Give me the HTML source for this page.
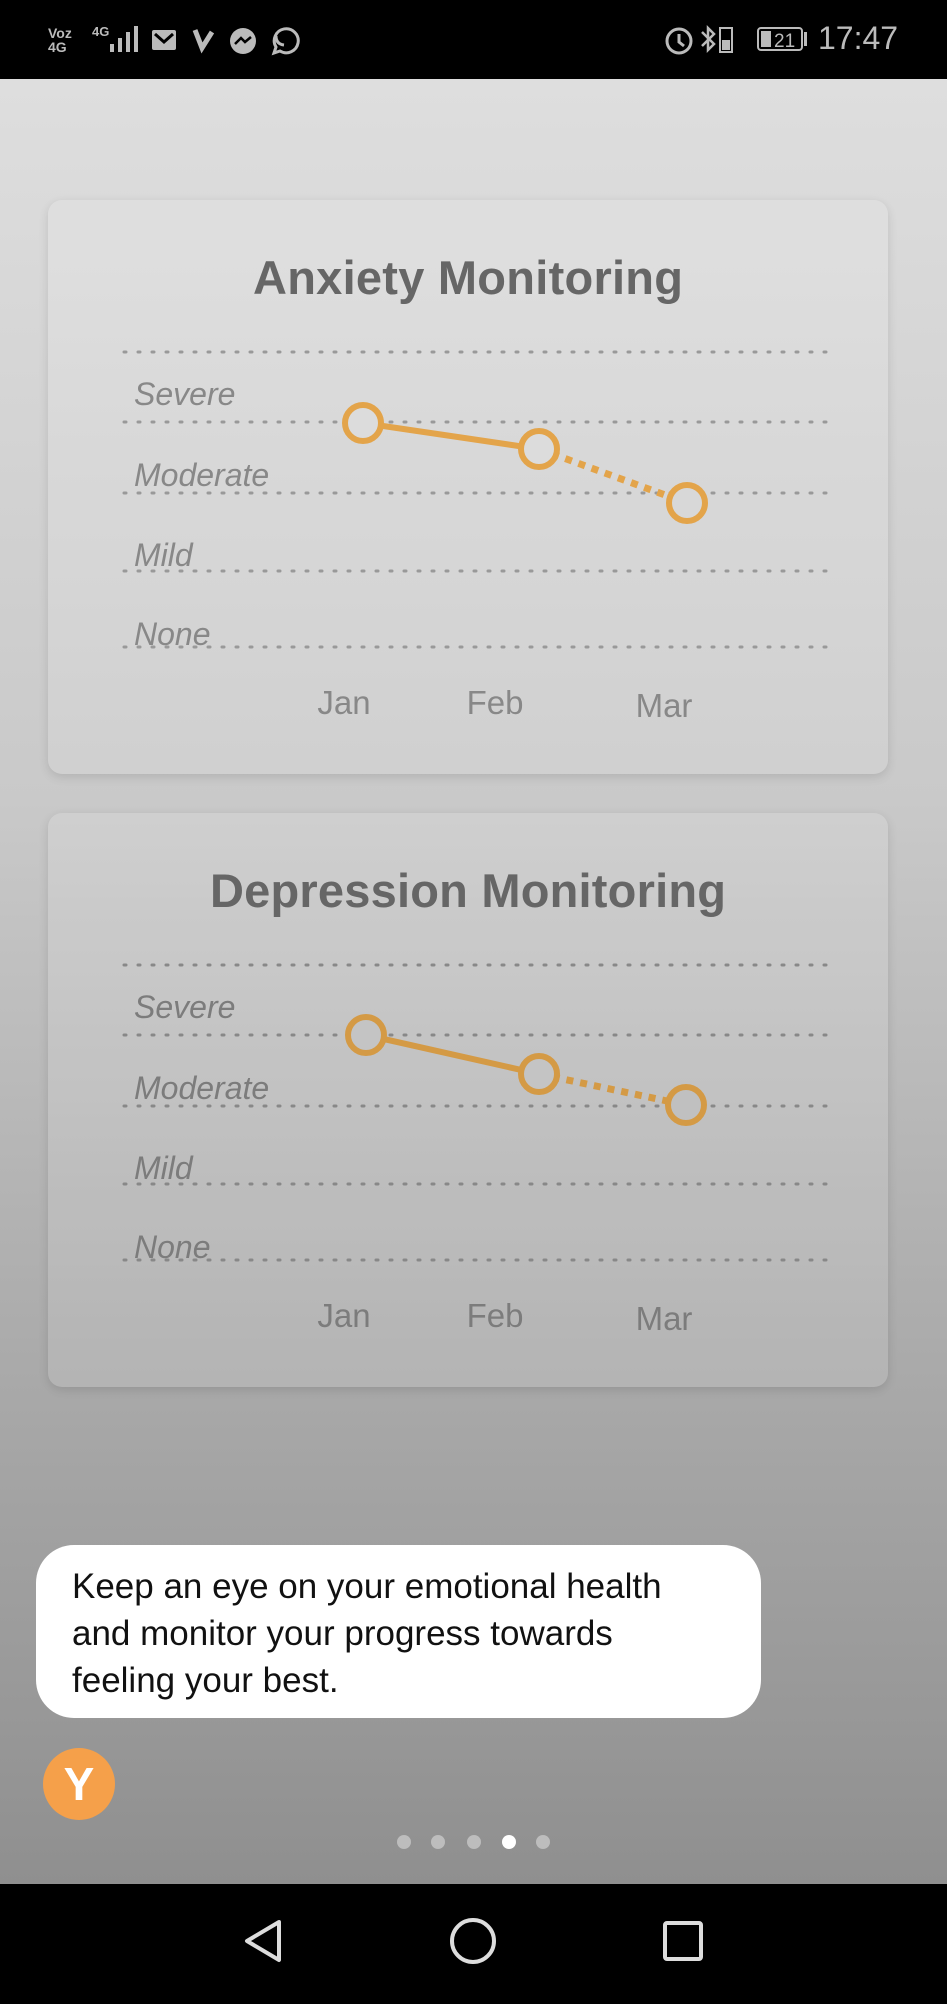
<!DOCTYPE html>
<html><head><meta charset="utf-8"><style>
*{margin:0;padding:0;box-sizing:border-box}
html{background:#000}
body{width:947px;height:1999px;overflow:hidden;font-family:"Liberation Sans",sans-serif;position:relative;background:linear-gradient(#dedede 79px,#c9c9c9 800px,#a8a8a8 1400px,#8f8f8f 1884px)}
.status{position:absolute;left:0;top:0;width:947px;height:79px;background:#000;color:#bbb}
.nav{position:absolute;left:0;top:1884px;width:947px;height:115px;background:#000}
.card{position:absolute;left:48px;width:840px;border-radius:14px;background:rgba(255,255,255,0.13);box-shadow:0 3px 10px rgba(0,0,0,0.12)}
.bubble{position:absolute;left:36px;top:1545px;width:725px;height:173px;background:#fff;border-radius:38px;padding:18px 0 0 36px;font-size:35px;line-height:47px;color:#111}
.av{position:absolute;left:43px;top:1748px;width:72px;height:72px;border-radius:50%;background:#f5a04a;color:#fff;font-weight:bold;font-size:46px;text-align:center;line-height:72px}
.dot{position:absolute;top:1835px;width:14px;height:14px;border-radius:50%;background:#bdbdbd}
</style></head><body>
<div class="status">
<div style="position:absolute;left:48px;top:26px;font-size:14px;line-height:14px;font-weight:bold;color:#bbb">Voz<br>4G</div>
<div style="position:absolute;left:92px;top:24px;font-size:13px;font-weight:bold">4G</div>
<svg style="position:absolute;left:100px;top:24px" width="48" height="32"><g fill="#bbb"><rect x="10" y="20" width="4" height="8"/><rect x="18" y="14" width="4" height="14"/><rect x="26" y="8" width="4" height="20"/><rect x="34" y="2" width="4" height="26"/></g></svg>
<svg style="position:absolute;left:150px;top:26px" width="150" height="30"><rect x="2" y="4" width="24" height="20" rx="2" fill="#bbb"/><path d="M5 8 L14 16 L23 8" stroke="#000" stroke-width="3" fill="none"/><path d="M45 4 L52 22 L62 6" stroke="#bbb" stroke-width="5" fill="none"/><circle cx="93" cy="15" r="13" fill="#bbb"/><path d="M85 18 L91 12 L95 16 L101 11" stroke="#000" stroke-width="2.5" fill="none"/><path d="M124 27 L126 21 A12 12 0 1 1 130 25 Z" stroke="#bbb" stroke-width="3" fill="none"/><path d="M126 10 q0 8 8 9" stroke="#bbb" stroke-width="3" fill="none"/></svg>
<svg style="position:absolute;left:662px;top:22px" width="150" height="34"><circle cx="17" cy="19" r="12" stroke="#bbb" stroke-width="3" fill="none"/><path d="M17 12v8l5 4" stroke="#bbb" stroke-width="3" fill="none"/><path d="M40 10 L52 22 L46 28 V6 L52 12 L40 24" stroke="#bbb" stroke-width="2.5" fill="none"/><rect x="58" y="6" width="12" height="24" stroke="#bbb" stroke-width="2" fill="none"/><rect x="60" y="18" width="8" height="10" fill="#bbb"/><rect x="96" y="6" width="44" height="22" rx="3" stroke="#bbb" stroke-width="2" fill="none"/><rect x="99" y="9" width="10" height="16" fill="#bbb"/><text x="112" y="25" font-size="19" fill="#bbb" font-family="Liberation Sans">21</text><rect x="142" y="10" width="3" height="14" fill="#bbb"/></svg>
<div style="position:absolute;left:818px;top:20px;font-size:32px;color:#bbb">17:47</div>
</div>

<div class="card" style="top:200px;height:574px"></div>
<div class="card" style="top:813px;height:574px"></div>

<svg style="position:absolute;left:0;top:0" width="947" height="1400">
<g font-family="Liberation Sans, sans-serif">
<g>
<text x="468" y="294" text-anchor="middle" font-size="47" font-weight="bold" fill="#666" textLength="430">Anxiety Monitoring</text>
<g stroke="#999" stroke-width="3" stroke-dasharray="2 12" stroke-linecap="round">
<line x1="124" y1="352" x2="835" y2="352"/><line x1="124" y1="422" x2="835" y2="422"/><line x1="124" y1="493" x2="835" y2="493"/><line x1="124" y1="571" x2="835" y2="571"/><line x1="124" y1="647" x2="835" y2="647"/></g>
<g font-style="italic" font-size="32" fill="#888"><text x="134" y="405">Severe</text><text x="134" y="486">Moderate</text><text x="134" y="566">Mild</text><text x="134" y="645">None</text></g>
<g font-size="33" fill="#888" text-anchor="middle"><text x="344" y="714">Jan</text><text x="495" y="714">Feb</text><text x="664" y="717">Mar</text></g>
<line x1="363" y1="423" x2="539" y2="449" stroke="#e3a44a" stroke-width="6"/>
<line x1="539" y1="449" x2="687" y2="503" stroke="#e3a44a" stroke-width="7" stroke-dasharray="7 7"/>
<g stroke="#e3a44a" stroke-width="6" fill="#dcdcdc"><circle cx="363" cy="423" r="18"/><circle cx="539" cy="449" r="18"/><circle cx="687" cy="503" r="18" fill="#d8d8d8"/></g>
</g>
<g transform="translate(0,613)">
<text x="468" y="294" text-anchor="middle" font-size="47" font-weight="bold" fill="#666" textLength="516">Depression Monitoring</text>
<g stroke="#888" stroke-width="3" stroke-dasharray="2 12" stroke-linecap="round">
<line x1="124" y1="352" x2="835" y2="352"/><line x1="124" y1="422" x2="835" y2="422"/><line x1="124" y1="493" x2="835" y2="493"/><line x1="124" y1="571" x2="835" y2="571"/><line x1="124" y1="647" x2="835" y2="647"/></g>
<g font-style="italic" font-size="32" fill="#7c7c7c"><text x="134" y="405">Severe</text><text x="134" y="486">Moderate</text><text x="134" y="566">Mild</text><text x="134" y="645">None</text></g>
<g font-size="33" fill="#7c7c7c" text-anchor="middle"><text x="344" y="714">Jan</text><text x="495" y="714">Feb</text><text x="664" y="717">Mar</text></g>
<line x1="366" y1="422" x2="539" y2="461" stroke="#d49a45" stroke-width="6"/>
<line x1="539" y1="461" x2="686" y2="492" stroke="#d49a45" stroke-width="7" stroke-dasharray="7 7"/>
<g stroke="#d49a45" stroke-width="6" fill="#c4c4c4"><circle cx="366" cy="422" r="18"/><circle cx="539" cy="461" r="18"/><circle cx="686" cy="492" r="18" fill="#c0c0c0"/></g>
</g>
</g></svg>

<div class="bubble">Keep an eye on your emotional health<br>and monitor your progress towards<br>feeling your best.</div>
<div class="av">Y</div>
<div class="dot" style="left:397px"></div><div class="dot" style="left:431px"></div><div class="dot" style="left:467px"></div><div class="dot" style="left:502px;background:#fff"></div><div class="dot" style="left:536px"></div>

<div class="nav">
<svg width="947" height="115"><g stroke="#ddd" stroke-width="4" fill="none" stroke-linejoin="round"><path d="M279 38 L247 57 L279 76 Z"/><circle cx="473" cy="57" r="21"/><rect x="665" y="39" width="36" height="36" rx="2"/></g></svg>
</div>
</body></html>
